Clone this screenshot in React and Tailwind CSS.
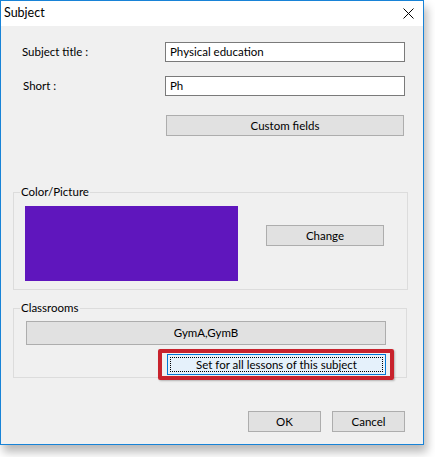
import React from 'react';

const font = { fontFamily: '"Segoe UI", Lato, "Noto Sans", sans-serif' };

const WinButton = ({ className = '', children }) => (
  <button
    className={`h-[21px] bg-[#e1e1e1] border border-[#adadad] text-[11.5px] text-black flex items-center justify-center leading-none ${className}`}
  >
    {children}
  </button>
);

const TextField = ({ value }) => (
  <div className="w-[240px] h-[20px] bg-white border border-[#7a7a7a] flex items-center pl-[4px] text-[11.5px] text-black leading-none">
    {value}
  </div>
);

const Group = ({ title, className = '', children }) => (
  <fieldset className={`ml-[12px] border border-[#dcdcdc] ${className}`}>
    <legend className="ml-[6px] px-[1px] text-[11.5px] leading-[16px] text-black">{title}</legend>
    {children}
  </fieldset>
);

const App = () => {
  return (
    <div className="w-[435px] h-[457px] bg-white" style={font}>
      <div className="w-[424px] h-[445px] border border-[#1883d7] bg-[#f0f0f0] flex flex-col shadow-[3px_7px_9px_rgba(0,0,0,0.28)]">
        {/* title bar */}
        <div className="h-[25px] bg-white flex items-center justify-between pl-[3px] pr-[9px]">
          <span className="text-[12.5px] text-black">Subject</span>
          <svg width="11" height="11" viewBox="0 0 11 11" className="mb-[1px]">
            <path d="M0.5 0.5L10.5 10.5M10.5 0.5L0.5 10.5" stroke="#000" strokeWidth="1" />
          </svg>
        </div>

        {/* fields */}
        <div className="mt-[16px] flex items-center pl-[21px]">
          <span className="w-[143px] text-[11.5px] text-black">Subject title :</span>
          <TextField value="Physical education" />
        </div>
        <div className="mt-[14px] flex items-center pl-[22px]">
          <span className="w-[142px] text-[11.5px] text-black">Short :</span>
          <TextField value="Ph" />
        </div>
        <WinButton className="mt-[19px] ml-[165px] w-[238px]">Custom fields</WinButton>

        {/* Color/Picture */}
        <Group title="Color/Picture" className="mt-[48px] w-[395px]">
          <div className="flex pt-[6px] pb-[8px] pl-[11px]">
            <div className="w-[213px] h-[75px] bg-[#5f16bd]" />
            <WinButton className="ml-[28px] mt-[19px] w-[118px]">Change</WinButton>
          </div>
        </Group>

        {/* Classrooms */}
        <Group title="Classrooms" className="mt-[10px] w-[394px]">
          <div className="flex flex-col pt-[5px] pb-[2px] pl-[12px]">
            <WinButton className="w-[360px] h-[24px]">GymA,GymB</WinButton>
            <div className="relative mt-[9px] ml-[141px] w-[219px] h-[21px]">
              <button className="w-full h-full bg-[#e5f1fb] border border-[#0078d7] p-[2px] flex">
                <span className="flex-1 border border-dotted border-black flex items-center justify-center text-[11.5px] text-black leading-none">
                  Set for all lessons of this subject
                </span>
              </button>
              <span className="absolute left-[-9px] right-[-8px] top-[-5px] bottom-[-5px] border-[4px] border-[#c8222c] rounded-[2px] shadow-[1px_1px_2px_rgba(0,0,0,0.25)] pointer-events-none" />
            </div>
          </div>
        </Group>

        {/* footer */}
        <div className="mt-[33px] flex justify-end gap-[11px] pr-[18px]">
          <WinButton className="w-[73px]">OK</WinButton>
          <WinButton className="w-[73px]">Cancel</WinButton>
        </div>
      </div>
    </div>
  );
};

export default App;
